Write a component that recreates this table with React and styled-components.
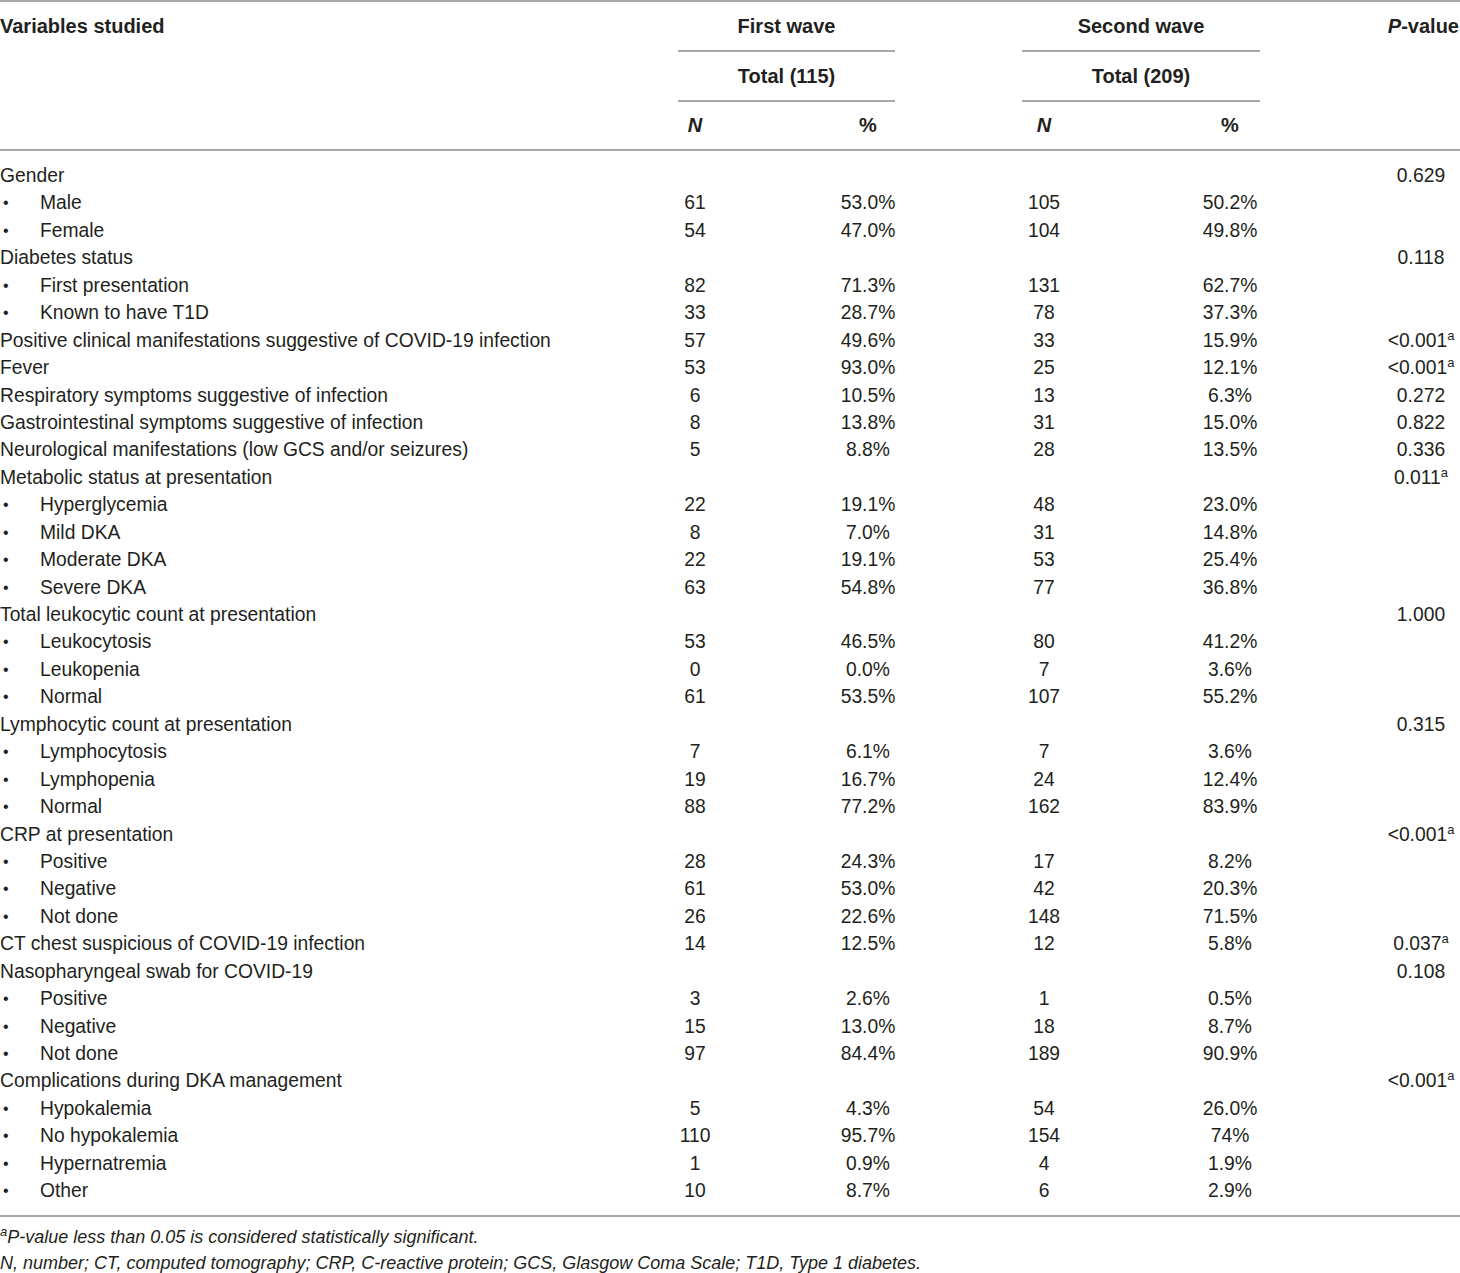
import styled, { createGlobalStyle } from "styled-components";

const ink = "#231f20";
const rule = "#a8a8a8";
const cols = "660px 70px 276px 76px 296px 82px";

const Global = createGlobalStyle`
  html, body {
    margin: 0;
    padding: 0;
    background: #ffffff;
  }
  body {
    font-family: "Liberation Sans", Arial, sans-serif;
    color: ${ink};
  }
`;

const Page = styled.div`
  width: 1460px;
  border-top: 2px solid ${rule};
`;

const Head = styled.div`
  display: grid;
  grid-template-columns: ${cols};
  grid-template-rows: 50px 50px 47px;
  border-bottom: 2px solid ${rule};
  font-size: 20px;
  font-weight: bold;
`;

const HeadLabel = styled.div`
  grid-column: ${(p) => p.col};
  grid-row: 1 / 4;
  text-align: ${(p) => p.align || "left"};
  line-height: 48px;
  padding-right: ${(p) => p.pr || 0}px;
`;

const GroupCell = styled.div`
  grid-column: ${(p) => p.col};
  grid-row: ${(p) => p.row};
  margin: 0 ${(p) => p.mr}px 0 ${(p) => p.ml}px;
  border-bottom: 2px solid ${rule};
  text-align: center;
  line-height: 48px;
`;

const SubHead = styled.div`
  grid-column: ${(p) => p.col};
  grid-row: 3;
  text-align: center;
  line-height: 47px;
  font-style: ${(p) => (p.italic ? "italic" : "normal")};
`;

const Body = styled.div`
  padding: 11px 0 10px;
  border-bottom: 2px solid ${rule};
  font-size: 19.3px;
`;

const Row = styled.div`
  display: grid;
  grid-template-columns: ${cols};
  height: 27.45px;
  line-height: 27.45px;
  white-space: nowrap;
`;

const Label = styled.div`
  display: flex;
`;

const Bullet = styled.span`
  width: 40px;
  padding-left: 3px;
  box-sizing: border-box;
  font-size: 16px;
`;

const Cell = styled.div`
  text-align: center;
`;

const PCell = styled.div`
  text-align: center;
  padding-left: 4px;
`;

const Sup = styled.sup`
  font-size: 13px;
  line-height: 0;
  vertical-align: 7px;
`;

const Notes = styled.div`
  padding-top: 7px;
  font-size: 18px;
  font-style: italic;
  line-height: 26px;
`;

const rows = [
  ["Gender", 0, "", "", "", "", "0.629"],
  ["Male", 1, "61", "53.0%", "105", "50.2%"],
  ["Female", 1, "54", "47.0%", "104", "49.8%"],
  ["Diabetes status", 0, "", "", "", "", "0.118"],
  ["First presentation", 1, "82", "71.3%", "131", "62.7%"],
  ["Known to have T1D", 1, "33", "28.7%", "78", "37.3%"],
  ["Positive clinical manifestations suggestive of COVID-19 infection", 0, "57", "49.6%", "33", "15.9%", "<0.001", true],
  ["Fever", 0, "53", "93.0%", "25", "12.1%", "<0.001", true],
  ["Respiratory symptoms suggestive of infection", 0, "6", "10.5%", "13", "6.3%", "0.272"],
  ["Gastrointestinal symptoms suggestive of infection", 0, "8", "13.8%", "31", "15.0%", "0.822"],
  ["Neurological manifestations (low GCS and/or seizures)", 0, "5", "8.8%", "28", "13.5%", "0.336"],
  ["Metabolic status at presentation", 0, "", "", "", "", "0.011", true],
  ["Hyperglycemia", 1, "22", "19.1%", "48", "23.0%"],
  ["Mild DKA", 1, "8", "7.0%", "31", "14.8%"],
  ["Moderate DKA", 1, "22", "19.1%", "53", "25.4%"],
  ["Severe DKA", 1, "63", "54.8%", "77", "36.8%"],
  ["Total leukocytic count at presentation", 0, "", "", "", "", "1.000"],
  ["Leukocytosis", 1, "53", "46.5%", "80", "41.2%"],
  ["Leukopenia", 1, "0", "0.0%", "7", "3.6%"],
  ["Normal", 1, "61", "53.5%", "107", "55.2%"],
  ["Lymphocytic count at presentation", 0, "", "", "", "", "0.315"],
  ["Lymphocytosis", 1, "7", "6.1%", "7", "3.6%"],
  ["Lymphopenia", 1, "19", "16.7%", "24", "12.4%"],
  ["Normal", 1, "88", "77.2%", "162", "83.9%"],
  ["CRP at presentation", 0, "", "", "", "", "<0.001", true],
  ["Positive", 1, "28", "24.3%", "17", "8.2%"],
  ["Negative", 1, "61", "53.0%", "42", "20.3%"],
  ["Not done", 1, "26", "22.6%", "148", "71.5%"],
  ["CT chest suspicious of COVID-19 infection", 0, "14", "12.5%", "12", "5.8%", "0.037", true],
  ["Nasopharyngeal swab for COVID-19", 0, "", "", "", "", "0.108"],
  ["Positive", 1, "3", "2.6%", "1", "0.5%"],
  ["Negative", 1, "15", "13.0%", "18", "8.7%"],
  ["Not done", 1, "97", "84.4%", "189", "90.9%"],
  ["Complications during DKA management", 0, "", "", "", "", "<0.001", true],
  ["Hypokalemia", 1, "5", "4.3%", "54", "26.0%"],
  ["No hypokalemia", 1, "110", "95.7%", "154", "74%"],
  ["Hypernatremia", 1, "1", "0.9%", "4", "1.9%"],
  ["Other", 1, "10", "8.7%", "6", "2.9%"],
];

export default function App() {
  return (
    <Page>
      <Global />
      <Head>
        <HeadLabel col="1">Variables studied</HeadLabel>
        <GroupCell col="2 / 4" row="1" ml={18} mr={111}>First wave</GroupCell>
        <GroupCell col="2 / 4" row="2" ml={18} mr={111}>Total (115)</GroupCell>
        <GroupCell col="4 / 6" row="1" ml={16} mr={118}>Second wave</GroupCell>
        <GroupCell col="4 / 6" row="2" ml={16} mr={118}>Total (209)</GroupCell>
        <SubHead col="2" italic>N</SubHead>
        <SubHead col="3">%</SubHead>
        <SubHead col="4" italic>N</SubHead>
        <SubHead col="5">%</SubHead>
        <HeadLabel col="6" align="right" pr={1}>
          <i>P</i>-value
        </HeadLabel>
      </Head>
      <Body>
        {rows.map(([label, bullet, n1, p1, n2, p2, pv, sig], i) => (
          <Row key={i}>
            <Label>
              {bullet ? <Bullet>•</Bullet> : null}
              {label}
            </Label>
            <Cell>{n1}</Cell>
            <Cell>{p1}</Cell>
            <Cell>{n2}</Cell>
            <Cell>{p2}</Cell>
            <PCell>
              {pv}
              {sig ? <Sup>a</Sup> : null}
            </PCell>
          </Row>
        ))}
      </Body>
      <Notes>
        <div>
          <Sup>a</Sup>P-value less than 0.05 is considered statistically significant.
        </div>
        <div>
          N, number; CT, computed tomography; CRP, C-reactive protein; GCS, Glasgow Coma Scale; T1D, Type 1 diabetes.
        </div>
      </Notes>
    </Page>
  );
}
